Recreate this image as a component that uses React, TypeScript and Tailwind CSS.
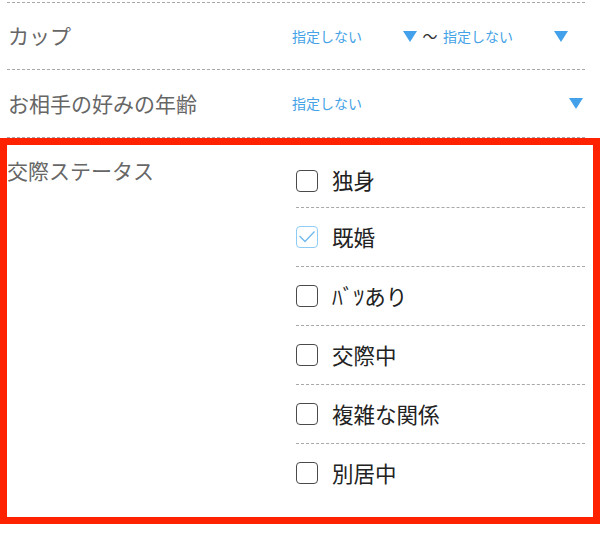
import { Fragment } from "react";

const statuses = [
  { label: "独身", checked: false },
  { label: "既婚", checked: true },
  { label: "ﾊﾞﾂあり", checked: false },
  { label: "交際中", checked: false },
  { label: "複雑な関係", checked: false },
  { label: "別居中", checked: false },
];

function Caret() {
  return (
    <svg width="14" height="11" viewBox="0 0 14 11" className="shrink-0">
      <path d="M0 0 H14 L7 11 Z" fill="#42a1ea" />
    </svg>
  );
}

function Checkbox({ checked }: { checked: boolean }) {
  if (checked) {
    return (
      <div className="w-[22px] h-[22px] rounded-[4px] border-[1.5px] border-[#8ecbf5] flex items-center justify-center shrink-0">
        <svg width="18" height="14" viewBox="0 0 18 14">
          <path d="M1.5 6 L7 11.5 L16.5 1.5" fill="none" stroke="#6db9ef" strokeWidth="1.3" />
        </svg>
      </div>
    );
  }
  return <div className="w-[22px] h-[22px] rounded-[4px] border-[1.5px] border-[#4a4a4a] shrink-0" />;
}

export default function App() {
  return (
    <div
      className="w-[600px] h-[533px] bg-white overflow-hidden"
      style={{ fontFamily: '"Noto Sans CJK JP", "Noto Sans", sans-serif' }}
    >
      {/* select rows */}
      <div className="ml-[7px] mr-[15px] pt-[2px]">
        <div className="h-[67px] border-t border-dashed border-[#a8a8a8] flex items-center">
          <div className="w-[285px] pl-[1px] text-[21px] text-[#666]">カップ</div>
          <div className="w-[125px] flex items-center justify-between text-[14px] text-[#45a2e6]">
            <span>指定しない</span>
            <Caret />
          </div>
          <div className="w-[26px] text-center text-[15px] text-[#333]">〜</div>
          <div className="w-[125px] flex items-center justify-between text-[14px] text-[#45a2e6]">
            <span>指定しない</span>
            <Caret />
          </div>
        </div>
        <div className="h-[69px] border-y border-dashed border-[#a8a8a8] flex items-center">
          <div className="w-[285px] pl-[1px] text-[21px] text-[#666]">お相手の好みの年齢</div>
          <div className="flex-1 flex items-center justify-between pr-[2px] text-[14px] text-[#45a2e6]">
            <span>指定しない</span>
            <Caret />
          </div>
        </div>
      </div>

      {/* highlighted status block */}
      <div className="h-[386px] border-[7px] border-[#ff2200] flex">
        <div className="w-[289px] pt-[10px] text-[21px] text-[#666] leading-[1.5]">交際ステータス</div>
        <div className="flex-1 mr-[8px]">
          {statuses.map((s, i) => (
            <Fragment key={s.label}>
              <div
                className={
                  i === 0
                    ? "h-[62px] pt-[9px] flex items-center"
                    : "h-[59px] border-t border-dashed border-[#a8a8a8] flex items-center"
                }
              >
                <div className="flex items-center gap-[14px]">
                  <Checkbox checked={s.checked} />
                  <span className="text-[21.5px] text-[#222]">{s.label}</span>
                </div>
              </div>
            </Fragment>
          ))}
        </div>
      </div>
    </div>
  );
}
